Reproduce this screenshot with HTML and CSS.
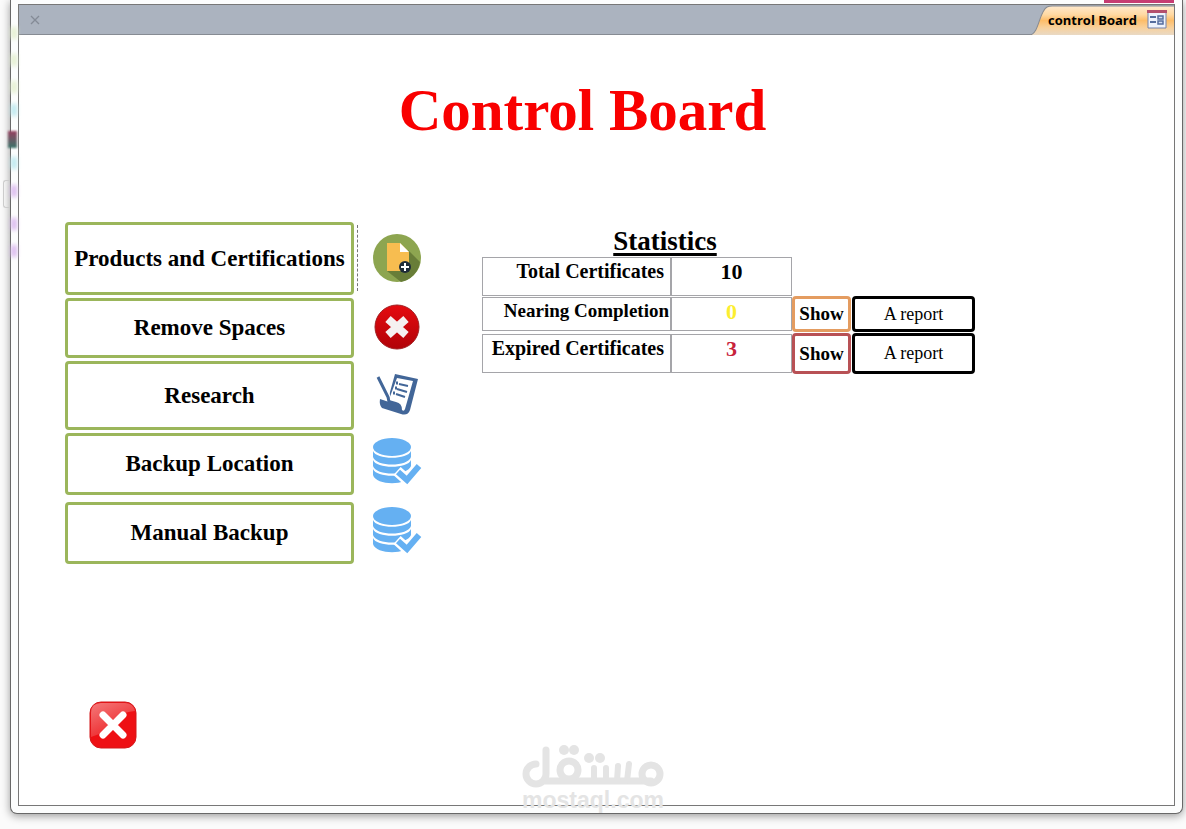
FILE: index.html
```html
<!DOCTYPE html>
<html lang="en">
<head>
<meta charset="utf-8">
<title>Control Board</title>
<meta name="viewport" content="width=device-width, initial-scale=1">
<link rel="stylesheet" href="styles.css">
</head>
<body>
<svg class="symbols" aria-hidden="true">
  <symbol id="database" viewBox="0 0 50 50">
    <g fill="#65b0f2">
      <ellipse cx="20" cy="9" rx="19" ry="9"/>
      <path d="M1 13C4 22 36 22 39 13V19C36 29 4 29 1 19Z"/>
      <path d="M1 22C4 31 36 31 39 22V28C36 38 4 38 1 28Z"/>
      <path d="M1 31C4 40 36 40 39 31V37C36 48 4 48 1 37Z"/>
    </g>
    <path d="M25 33L35 42L48 27" fill="none" stroke="#fff" stroke-width="11"/>
    <path d="M26 34L35 42L47 28" fill="none" stroke="#65b0f2" stroke-width="6"/>
  </symbol>
</svg>
<div class="backdrop" aria-hidden="true">
  <i class="spot green s1"></i><i class="spot green s2"></i><i class="spot green s3"></i>
  <i class="spot cyan s4"></i><i class="spot books s5"></i><i class="spot cyan s6"></i>
  <i class="hover"></i>
  <i class="spot violet s7"></i><i class="spot violet s8"></i><i class="spot violet s9"></i>
</div>
<div class="window">
  <i class="ribbon" aria-hidden="true"></i>
  <div class="panel">
    <header class="tabs">
      <button class="close" aria-label="Close tab">
        <svg width="10" height="10" viewBox="0 0 10 10"><path d="M1 1L9 9M9 1L1 9" stroke="#848b96" stroke-width="1.3"/></svg>
      </button>
      <button class="tab">
        <svg class="tab-shape" viewBox="0 0 143 30" preserveAspectRatio="none" aria-hidden="true">
          <defs><linearGradient id="tabFill" x2="0" y2="1"><stop offset="0" stop-color="#ffe9cd"/><stop offset=".3" stop-color="#ffd9a2"/><stop offset=".5" stop-color="#fdbd69"/><stop offset=".75" stop-color="#f8d19c"/><stop offset="1" stop-color="#e9d9c4"/></linearGradient></defs>
          <path d="M0 30C9 29 9 6 17 2Q19 1 22 1H143V30Z" fill="url(#tabFill)"/>
          <path d="M0 30C9 29 9 6 17 2Q19 1 22 1H143" fill="none" stroke="#878a90"/>
        </svg>
        <span>control Board</span>
        <svg class="form-icon" width="20" height="19" viewBox="0 0 20 19" aria-hidden="true">
          <path d="M1 1H19V18H1Z" fill="#eef2fb" stroke="#7583ab"/>
          <path d="M0 0H20V3H0Z" fill="#b34f6d"/>
          <path d="M3 7H9M3 12H9" stroke="#566d9e" stroke-width="2"/>
          <path d="M11 6H16V9H11ZM11 11H16V14H11Z" fill="#d2dcf2" stroke="#566d9e" stroke-width="1.500"/>
        </svg>
      </button>
    </header>
    <main class="form">
      <h1>Control Board</h1>
      <div class="columns">
        <nav class="menu">
          <div class="item tall dotted"><button>Products and Certifications</button>
            <svg width="48" height="48" viewBox="0 0 48 48" aria-hidden="true">
              <circle cx="24" cy="24" r="24" fill="#8da550"/>
              <path d="M35 16L47 28A24 24 0 0 1 28 48L14 37Z" fill="#687d38"/>
              <path d="M14 9H27L36 18V37H14Z" fill="#f7bd50"/><path d="M27 9L36 18H27Z" fill="#fff"/>
              <circle cx="32" cy="33" r="6" fill="#1e2b38"/><path d="M32 29V37M28 33H36" stroke="#fff" stroke-width="2"/>
            </svg></div>
          <div class="item low"><button>Remove Spaces</button>
            <svg width="46" height="46" viewBox="0 0 46 46" aria-hidden="true">
              <defs><linearGradient id="redDisc" x2="0" y2="1"><stop stop-color="#e50b10"/><stop offset="1" stop-color="#b10208"/></linearGradient></defs>
              <circle cx="23" cy="23" r="22" fill="url(#redDisc)" stroke="#9f1e20"/>
              <path d="M14 15L32 31M32 15L14 31" stroke="#f5f1f1" stroke-width="8"/>
            </svg></div>
          <div class="item mid"><button>Research</button>
            <svg width="42" height="42" viewBox="0 0 42 42" aria-hidden="true">
              <path d="M19 0L42 5L34 36Q32 42 25 40L6 34Q3 31 4 25L13 28L14 18Z" fill="#426698"/>
              <path d="M21 4L37 7L29 35Q28 38 26 36Q26 29 20 28L13 26L15 20Z" fill="#fff"/>
              <path d="M2 3L12 24" fill="none" stroke="#fff" stroke-width="6"/>
              <path d="M2 3L12 23L13 28" fill="none" stroke="#426698" stroke-width="3"/>
              <path d="M23 10L32 12M21 15L31 18M20 20L29 23" stroke="#426698" stroke-width="2"/>
              <path d="M20 9H22M19 14H21M17 19H19" stroke="#426698" stroke-width="3"/>
            </svg></div>
          <div class="item base"><button>Backup Location</button>
            <svg width="50" height="50" aria-hidden="true"><use href="#database"/></svg></div>
          <div class="item base last"><button>Manual Backup</button>
            <svg width="50" height="50" aria-hidden="true"><use href="#database"/></svg></div>
        </nav>
        <section class="stats">
          <h2>Statistics</h2>
          <table>
            <tbody>
            <tr class="total"><th scope="row">Total Certificates</th><td class="value">10</td></tr>
            <tr class="near"><th scope="row">Nearing Completion</th><td class="value">0</td><td><button class="show">Show</button></td><td><button class="report">A report</button></td></tr>
            <tr class="expired"><th scope="row">Expired Certificates</th><td class="value">3</td><td><button class="show">Show</button></td><td><button class="report">A report</button></td></tr>
            </tbody>
          </table>
        </section>
      </div>
      <button class="exit" aria-label="Exit">
        <svg width="48" height="48" viewBox="0 0 48 48">
          <defs><linearGradient id="gloss" x2=".6" y2="1"><stop stop-color="#f47a7a"/><stop offset="1" stop-color="#ed2024"/></linearGradient></defs>
          <rect x="1" y="1" width="46" height="46" rx="11" fill="#ee1014" stroke="#d3181b"/>
          <path d="M2 12Q2 2 12 2H36Q44 2 46 10Q24 12 15 31Q8 34 2 36Z" fill="url(#gloss)"/>
          <path d="M14 14L34 34M34 14L14 34" stroke="#fff" stroke-width="7" stroke-linecap="round"/>
        </svg>
      </button>
    </main>
  </div>
</div>
<div class="watermark">
  <svg width="142" height="44" viewBox="0 0 142 44" role="img" aria-label="مستقل">
    <g fill="none" stroke="#e4e4e4" stroke-width="7" stroke-linecap="round" stroke-linejoin="round">
      <path d="M14 19A10 10 0 1 0 24 29V5M24 36H129"/>
      <circle cx="47" cy="25" r="9"/><circle cx="129" cy="29" r="9"/>
      <path stroke-width="6" d="M72 23V36M84 23V36M96 21L95 36M107 19L105 36"/>
    </g>
    <g fill="#e4e4e4"><circle cx="42" cy="5" r="5"/><circle cx="52" cy="5" r="5"/><circle cx="67" cy="13" r="5"/><circle cx="78" cy="13" r="5"/></g>
  </svg>
  <span>mostaql.com</span>
</div>
</body>
</html>
```
FILE: styles.css
```css
* { box-sizing: border-box; }
body {
  margin: 0;
  min-height: 100vh;
  display: flex;
  position: relative;
  background: #fbfbfb;
  color: #000;
  font-family: "Liberation Serif", serif;
}
button {
  padding: 0;
  border: 0;
  background: none;
  color: inherit;
  font: inherit;
}
svg { display: block; flex: none; }
.symbols { position: absolute; width: 0; height: 0; }

.window {
  flex: 1;
  display: flex;
  position: relative;
  margin: 0 3px 15px 10px;
  padding: 4px 7px 7px 7px;
  border: 1px solid #686868;
  border-top: 0;
  border-radius: 0 0 7px 7px;
  background: #fcfdfd;
  box-shadow: 0 2px 8px #999;
}
.ribbon {
  position: absolute;
  top: 0;
  right: 8px;
  width: 70px;
  height: 3px;
  background: #c63c72;
}
.panel {
  flex: 1;
  display: flex;
  flex-direction: column;
  border: 1px solid #777;
  background: #fff;
}
.tabs {
  height: 30px;
  display: flex;
  align-items: center;
  justify-content: space-between;
  padding-left: 11px;
  border-bottom: 1px solid #868b93;
  background: #abb3bf;
}
.tab {
  display: flex;
  align-items: center;
  gap: 10px;
  position: relative;
  height: 30px;
  padding: 0 7px 0 18px;
  font: bold 13px "Open Sans", sans-serif;
}
.tab span, .form-icon { position: relative; }
.tab-shape {
  position: absolute;
  inset: 0;
  width: 100%;
  height: 100%;
}

.form {
  flex: 1;
  display: flex;
  flex-direction: column;
  align-items: flex-start;
  padding: 40px 46px 56px;
}
h1 {
  align-self: center;
  margin: 0 28px 77px 0;
  color: #f90000;
  font-size: 59px;
  line-height: 70px;
}
.columns { display: flex; align-items: flex-start; gap: 60px; }
.menu { display: flex; flex-direction: column; gap: 3px; }
.item {
  display: grid;
  grid-template-columns: 289px 50px;
  column-gap: 18px;
  align-items: center;
  justify-items: center;
  position: relative;
}
.item svg { margin-bottom: 2px; }
.item button {
  width: 100%;
  height: 100%;
  border: 3px solid #9bb65b;
  border-radius: 4px;
  font-size: 23px;
  font-weight: bold;
  white-space: nowrap;
}
.tall { height: 73px; }
.low { height: 60px; }
.mid { height: 69px; }
.base { height: 62px; }
.last { margin-top: 4px; }
.dotted::after {
  content: "";
  position: absolute;
  left: 292px;
  top: 3px;
  height: 66px;
  border-left: 1px dashed #777;
}

.stats { padding-top: 3px; }
h2 {
  width: 366px;
  margin: 0;
  font-size: 27px;
  line-height: 32px;
  text-align: center;
  text-decoration: underline;
  text-decoration-thickness: 3px;
  text-underline-offset: 3px;
}
table, tbody { display: block; }
tr {
  display: grid;
  grid-template-columns: 190px 120px 59px 124px;
}
.total { height: 39px; }
.near { height: 36px; margin-bottom: 1px; }
.expired { height: 41px; }
th, td { padding: 0; }
th, .value {
  border: 1px solid #a5a5a9;
  line-height: 26px;
}
th {
  padding-right: 6px;
  border-right-width: 2px;
  font-size: 20px;
  text-align: right;
  white-space: nowrap;
}
.near th { padding-right: 1px; font-size: 19px; }
.value {
  border-left: 0;
  font-size: 22px;
  font-weight: bold;
  line-height: 28px;
  text-align: center;
}
.near th, .near .value, .expired th, .expired .value { margin: 1px 0; }
.near .value { color: #fcee30; }
.expired .value { color: #c8233b; }
.show, .report {
  width: 100%;
  height: 100%;
  border: 3px solid #000;
  border-radius: 4px;
  font-size: 18px;
}
td:last-child .report { width: calc(100% - 1px); margin-left: 1px; }
.show { font-size: 19px; font-weight: bold; }
.near .show { border-color: #e49c60; }
.expired .show { border-color: #b85155; }
.exit { margin: auto 0 0 24px; }

.watermark {
  position: absolute;
  left: 0;
  right: 0;
  bottom: 18px;
  display: flex;
  flex-direction: column;
  align-items: center;
  color: #e4e4e4;
  font: bold 23px/22px "Liberation Sans", sans-serif;
  pointer-events: none;
}

.backdrop { position: absolute; left: 0; top: 0; z-index: 1; }
.spot {
  position: absolute;
  left: 11px;
  width: 6px;
  height: 12px;
  filter: blur(2px);
}
.green { background: #e4efcf; }
.cyan { background: #bce8ee; }
.violet { background: #dab9ee; }
.books { left: 8px; width: 9px; height: 17px; background: linear-gradient(#97405f, #39746a); filter: blur(1px); }
.s1 { top: 27px; }
.s2 { top: 54px; }
.s3 { top: 81px; }
.s4 { top: 104px; }
.s5 { top: 131px; }
.s6 { top: 157px; }
.s7 { top: 185px; }
.s8 { top: 218px; }
.s9 { top: 245px; }
.hover {
  position: absolute;
  left: 3px;
  top: 180px;
  width: 7px;
  height: 28px;
  border: 1px solid #ccc;
  border-right: 0;
  border-radius: 3px 0 0 3px;
}
```
